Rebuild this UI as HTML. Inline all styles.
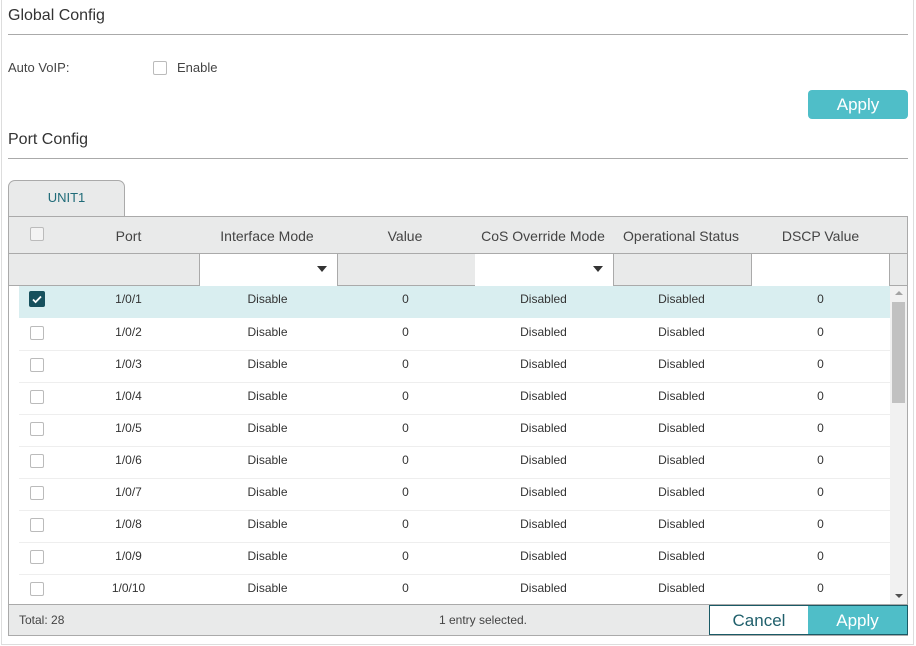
<!DOCTYPE html><html><head><style>
*{margin:0;padding:0;box-sizing:border-box}
body{width:916px;height:646px;background:#fff;font-family:"Liberation Sans",sans-serif;color:#333;position:relative;overflow:hidden}
.a{position:absolute}
.frame{left:1px;top:0;width:913px;height:645px;border:1px solid #ddd;border-top:none}
.h{font-size:16px;color:#333}
.hr{height:1px;background:#aaa}
.cb{width:14px;height:14px;border:1px solid #bbb;border-radius:2px;background:#fff}
.c{text-align:center;font-size:12px;color:#333}
.hd{text-align:center;font-size:14px;color:#444}
.btn{background:#4fbec8;color:#fff;font-size:17px;text-align:center}
</style></head><body>
<div class="a frame"></div>
<div class="a h" style="left:8px;top:7px">Global Config</div>
<div class="a hr" style="left:8px;top:34px;width:900px"></div>
<div class="a" style="left:8px;top:60px;font-size:13px;color:#444">Auto VoIP:</div>
<div class="a cb" style="left:153px;top:61px"></div>
<div class="a" style="left:177px;top:60px;font-size:13px;color:#444">Enable</div>
<div class="a btn" style="left:808px;top:90px;width:100px;height:29px;line-height:29px;border-radius:4px">Apply</div>
<div class="a h" style="left:8px;top:131px">Port Config</div>
<div class="a hr" style="left:8px;top:158px;width:900px"></div>
<div class="a" style="left:8px;top:180px;width:117px;height:37px;background:#e9eaea;border:1px solid #aaa;border-bottom:none;border-radius:7px 7px 0 0;color:#1f6b78;font-size:13px;text-align:center;line-height:34px">UNIT1</div>
<div class="a" style="left:8px;top:216px;width:900px;height:420px;border:1px solid #aaa;background:#fff"></div>
<div class="a" style="left:9px;top:217px;width:898px;height:69px;background:#e9eaea;border-bottom:1px solid #aaa"></div>
<div class="a" style="left:9px;top:253px;width:898px;height:1px;background:#aaa"></div>
<div class="a cb" style="left:30px;top:227px;background:#f3f3f3"></div>
<div class="a hd" style="left:59px;top:228px;width:139px">Port</div>
<div class="a hd" style="left:198px;top:228px;width:138px">Interface Mode</div>
<div class="a hd" style="left:336px;top:228px;width:138px">Value</div>
<div class="a hd" style="left:474px;top:228px;width:138px">CoS Override Mode</div>
<div class="a hd" style="left:612px;top:228px;width:138px">Operational Status</div>
<div class="a hd" style="left:751px;top:228px;width:139px">DSCP Value</div>
<div class="a" style="left:199px;top:254px;width:139px;height:32px;background:#fff;border-left:1px solid #aaa;border-right:1px solid #aaa"></div>
<div class="a" style="left:317px;top:266px;border:5px solid transparent;border-top:6px solid #333;border-bottom:none"></div>
<div class="a" style="left:337px;top:254px;width:139px;height:32px;border-right:1px solid #aaa"></div>
<div class="a" style="left:475px;top:254px;width:139px;height:32px;background:#fff;border-right:1px solid #aaa"></div>
<div class="a" style="left:593px;top:266px;border:5px solid transparent;border-top:6px solid #333;border-bottom:none"></div>
<div class="a" style="left:751px;top:254px;width:139px;height:32px;background:#fff;border-left:1px solid #aaa;border-right:1px solid #aaa"></div>
<div class="a" style="left:890px;top:286px;width:17px;height:318px;background:#f1f1f1"></div>
<div class="a" style="left:892px;top:302px;width:13px;height:101px;background:#c1c1c1"></div>
<div class="a" style="left:895px;top:291px;border:4px solid transparent;border-bottom:4px solid #a3a3a3;border-top:none"></div>
<div class="a" style="left:895px;top:594px;border:4px solid transparent;border-top:4px solid #505050;border-bottom:none"></div>
<div id="rows"></div>
<div class="a" style="left:9px;top:604px;width:898px;height:31px;background:#e9eaea;border-top:1px solid #aaa"></div>
<div class="a" style="left:19px;top:613px;font-size:12px;color:#444">Total: 28</div>
<div class="a" style="left:383px;top:613px;width:200px;text-align:center;font-size:12px;color:#444">1 entry selected.</div>
<div class="a" style="left:709px;top:605px;width:100px;height:30px;background:#fff;border:1px solid #1a5a66;color:#1f5f6b;font-size:17px;text-align:center;line-height:29px">Cancel</div>
<div class="a btn" style="left:808px;top:605px;width:100px;height:30px;line-height:30px;border:1px solid #1a5a66;border-left:none">Apply</div>
<script>
var h='';for(var i=0;i<10;i++){var t=i==0?286:287+32*i;var sel=i==0;
h+='<div class="a" style="left:19px;top:'+t+'px;width:871px;height:32px;'+(sel?'background:#d9eef0;':'border-bottom:1px solid #eee;')+'"></div>';
h+=sel?'<svg class="a" style="left:29px;top:'+(t+5)+'px" width="16" height="16"><rect width="16" height="16" rx="2" fill="#17505d"/><path d="M4 8.5l2.6 2.6L12 5.5" stroke="#fff" stroke-width="1.8" fill="none"/></svg>':'<div class="a cb" style="left:30px;top:'+(t+7)+'px"></div>';
var v=['1/0/'+(i+1),'Disable','0','Disabled','Disabled','0'];var L=[59,198,336,474,612,751];
for(var j=0;j<6;j++)h+='<div class="a c" style="left:'+L[j]+'px;top:'+(t+6)+'px;width:139px">'+v[j]+'</div>';}
document.getElementById('rows').innerHTML=h;
</script>
</body></html>
